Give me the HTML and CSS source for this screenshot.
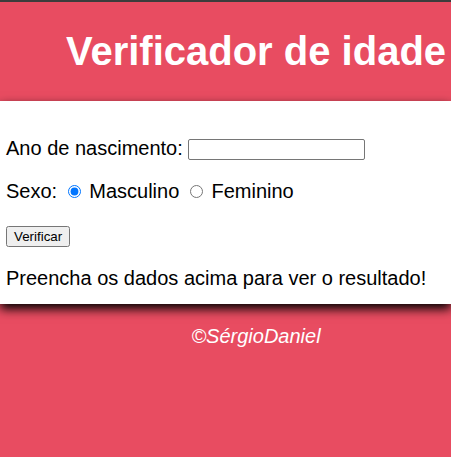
FILE: index.html
```html
<!DOCTYPE html>
<html lang="pt-BR">
<head>
<meta charset="UTF-8">
<title>Verificador de idade</title>
<link rel="stylesheet" href="styles.css">
</head>
<body>
<div class="topline"></div>
<header class="header">
  <h1 class="title">Verificador de idade</h1>
</header>
<section class="card">
  <p class="row row-first">Ano de nascimento: <input type="text" class="field"></p>
  <p class="row row-sex">Sexo:
    <input type="radio" name="sexo" class="radio" checked> <span class="opt">Masculino</span>
    <input type="radio" name="sexo" class="radio"> <span class="opt">Feminino</span>
  </p>
  <p class="row row-btn"><button type="button" class="btn">Verificar</button></p>
  <p class="row row-result">Preencha os dados acima para ver o resultado!</p>
</section>
<footer class="footer">
  <p class="credit">&copy;SérgioDaniel</p>
</footer>
</body>
</html>
```

FILE: styles.css
```css
html {
  overflow: hidden;
}

body {
  margin: 0;
  background: #e84c61;
  font-family: "Liberation Sans", Arial, sans-serif;
  font-size: 20px;
  color: #000;
}

.topline {
  height: 2px;
  background: #3c3c3c;
}

.header {
  background: #e84c61;
  padding: 26px 0 27px 61px;
}

.title {
  margin: 0;
  font-size: 40px;
  font-weight: bold;
  line-height: 46px;
  color: #fff;
  text-align: center;
  white-space: nowrap;
}

.card {
  position: relative;
  background: #fff;
  padding: 36px 6px 14px;
  box-shadow: 0 5px 10px rgba(0, 0, 0, 1);
}

.row {
  margin: 0;
  line-height: 23px;
}

.row-sex {
  margin-top: 20px;
}

.row-btn {
  margin-top: 21px;
}

.row-result {
  margin-top: 20px;
}

.field {
  font-family: "Liberation Sans", Arial, sans-serif;
  font-size: 13.33px;
  width: 171px;
  height: 17px;
  padding: 1px 2px;
  border: 1px solid #767676;
  border-radius: 2px;
  vertical-align: 1px;
}

.radio {
  margin: 3px 3px 0 5px;
}

.btn {
  font-family: "Liberation Sans", Arial, sans-serif;
  font-size: 13.33px;
  padding: 1px 6px;
  vertical-align: middle;
}

.footer {
  padding: 21px 0 0 61px;
}

.credit {
  margin: 0;
  line-height: 23px;
  text-align: center;
  font-style: italic;
  color: #fff;
}
```
